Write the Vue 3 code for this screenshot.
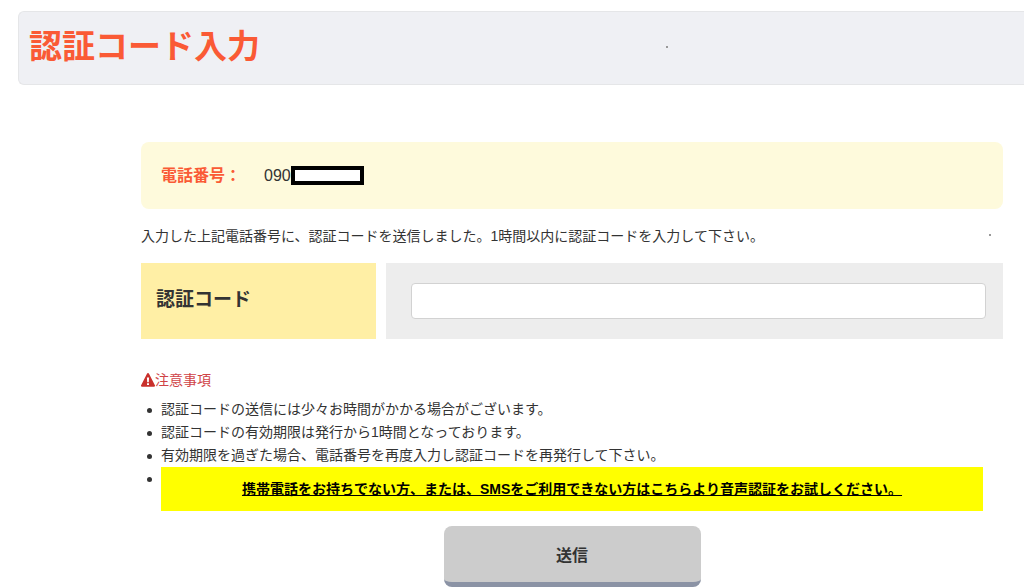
<script setup>
import { ref } from 'vue'

const code = ref('')
const notes = [
  '認証コードの送信には少々お時間がかかる場合がございます。',
  '認証コードの有効期限は発行から1時間となっております。',
  '有効期限を過ぎた場合、電話番号を再度入力し認証コードを再発行して下さい。',
]
</script>

<template>
  <div class="page">
    <header class="title-bar">
      <h1>認証コード入力</h1>
      <span class="speck title-speck" aria-hidden="true"></span>
    </header>

    <main class="content">
      <div class="phone">
        <span class="phone-label">電話番号：</span>
        <span class="phone-number">090<span class="mask"></span></span>
      </div>

      <p class="lead">
        入力した上記電話番号に、認証コードを送信しました。1時間以内に認証コードを入力して下さい。
        <span class="speck lead-speck" aria-hidden="true"></span>
      </p>

      <form @submit.prevent>
        <div class="field">
          <label class="field-label" for="code">認証コード</label>
          <div class="field-body">
            <input id="code" v-model="code" type="text" autocomplete="one-time-code" />
          </div>
        </div>

        <p class="caution">
          <svg viewBox="0 0 14 14" width="14" height="14" aria-hidden="true">
            <path d="M7 0c.4 0 .7.2.9.6l6 11.600c.4.700-.1 1.500-.9 1.500H1c-.8 0-1.300-.8-.9-1.500L6.100.6C6.300.2 6.600 0 7 0z" fill="#c9302c" />
            <path d="M5.900 4.600h2.200l-.3 4.600H6.200zM6 10.200h2v1.900H6z" fill="#fff" />
          </svg>注意事項
        </p>

        <ul class="notes">
          <li v-for="note in notes" :key="note">{{ note }}</li>
          <li>
            <div class="voice">
              <a href="#">携帯電話をお持ちでない方、または、SMSをご利用できない方はこちらより音声認証をお試しください。</a>
            </div>
          </li>
        </ul>

        <button class="submit" type="submit">送信</button>
      </form>
    </main>
  </div>
</template>

<style>
body {
  margin: 0;
  background: #fff;
}
</style>

<style scoped>
.page,
input,
button {
  font-family: "Liberation Sans", "Noto Sans CJK JP", sans-serif;
}

.page {
  padding-top: 11px;
  color: #333;
  font-size: 14px;
  line-height: 23px;
  overflow: hidden;
}

.title-bar {
  position: relative;
  box-sizing: border-box;
  margin-left: 18px;
  padding: 12px 10px;
  min-height: 74px;
  border: 1px solid #e5e6e8;
  border-right: 0;
  border-radius: 6px 0 0 6px;
  background: #eff0f4;
}

h1 {
  margin: 0;
  color: #fa5a35;
  font-size: 33px;
  font-weight: 700;
  line-height: 46px;
}

.speck {
  position: absolute;
  width: 2px;
  height: 2px;
  background: #999;
}

.title-speck {
  top: 34px;
  left: 647px;
}

.content {
  margin: 57px 21px 0 141px;
}

.phone {
  display: flex;
  align-items: center;
  gap: 23px;
  box-sizing: border-box;
  min-height: 67px;
  padding: 20px;
  border-radius: 8px;
  background: #fefadc;
  font-size: 16px;
}

.phone-label {
  color: #fa5a35;
  font-weight: 700;
}

.phone-number {
  display: flex;
  align-items: center;
}

.mask {
  box-sizing: border-box;
  width: 73px;
  height: 19px;
  border: 4px solid #000;
  background: #fff;
}

.lead {
  position: relative;
  margin: 16px 0 15px;
}

.lead-speck {
  top: 9px;
  right: 12px;
}

.field {
  display: grid;
  grid-template-columns: 235px 1fr;
  gap: 10px;
}

.field-label {
  padding: 25px 15px;
  background: #ffefa5;
  font-size: 19px;
  font-weight: 700;
}

.field-body {
  padding: 20px 17px 20px 25px;
  background: #ededed;
}

input {
  display: block;
  box-sizing: border-box;
  width: 100%;
  height: 36px;
  padding: 6px 12px;
  border: 1px solid #d2d2d2;
  border-radius: 4px;
  background: #fff;
  font-size: 14px;
}

.caution {
  display: flex;
  align-items: center;
  margin: 30px 0 6px;
  color: #d04347;
}

.caution svg {
  margin-bottom: 2px;
}

.notes {
  margin: 0;
  padding: 0 20px;
  list-style: none;
}

.notes li {
  position: relative;
}

.notes li::before {
  content: "";
  position: absolute;
  top: 10px;
  left: -14px;
  width: 5px;
  height: 5px;
  border-radius: 50%;
  background: #333;
}

.voice {
  padding: 10px;
  background: #ff0;
  line-height: 24px;
  text-align: center;
  font-weight: 700;
}

.voice a {
  color: #000;
  text-decoration-thickness: 1px;
}

.submit {
  display: block;
  box-sizing: border-box;
  width: 257px;
  height: 61px;
  margin: 15px auto 0;
  padding: 0;
  border: 0;
  border-bottom: 5px solid #8b93a5;
  border-radius: 8px;
  background: #ccc;
  color: #333;
  font-size: 16px;
  font-weight: 700;
}
</style>
